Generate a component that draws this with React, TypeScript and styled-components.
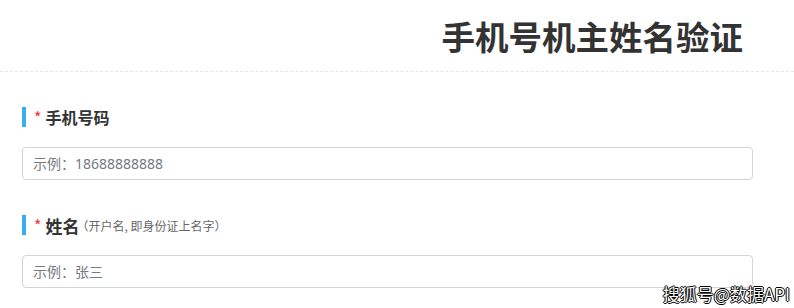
import React from 'react';
import styled, { createGlobalStyle } from 'styled-components';

const GlobalStyle = createGlobalStyle`
  html, body {
    margin: 0;
    padding: 0;
    background: #fff;
    font-family: "Microsoft YaHei", "Noto Sans CJK SC", "Noto Sans", sans-serif;
  }
`;

const Page = styled.div`
  position: relative;
  width: 794px;
  height: 308px;
  overflow: hidden;
  background: #fff;
`;

const Header = styled.div`
  height: 72px;
  display: flex;
  align-items: center;
  justify-content: flex-end;
  padding-right: 51px;
  border-bottom: 1px dashed #e6e6e6;
  box-sizing: border-box;
`;

const Title = styled.h1`
  margin: 0;
  font-size: 33.5px;
  font-weight: 700;
  color: #333;
  line-height: 1;
`;

const Form = styled.div`
  padding: 35px 41px 0 22px;
`;

const Field = styled.div<{ $first?: boolean }>`
  margin-top: ${(p) => (p.$first ? 0 : 35)}px;
`;

const Label = styled.div`
  display: flex;
  align-items: center;
  height: 20px;
  border-left: 4px solid #38adf0;
  padding-left: 8px;
  margin-bottom: 20px;
`;

const Star = styled.span`
  color: #f5302f;
  font-size: 16px;
  margin-right: 4px;
  font-weight: 400;
`;

const LabelText = styled.span<{ $size?: number }>`
  font-size: ${(p) => p.$size ?? 16}px;
  font-weight: 700;
  color: #333;
`;

const Hint = styled.span`
  font-size: 12px;
  color: #666;
  margin-left: -3px;
`;

const Input = styled.input`
  display: block;
  width: 100%;
  height: 33px;
  box-sizing: border-box;
  border: 1px solid #d2d4d8;
  border-radius: 4px;
  padding: 0 10px;
  font-size: 14px;
  font-family: "Noto Sans", "Noto Sans CJK SC", sans-serif;
  outline: none;
  &::placeholder {
    color: #737a84;
  }
`;

const Watermark = styled.div`
  position: absolute;
  right: 4px;
  bottom: 6px;
  font-size: 17px;
  line-height: 1;
  color: #fff;
  font-family: "Microsoft YaHei", "Noto Sans CJK SC", sans-serif;
  text-shadow: 0 0 1px #000, 1px 0 0 #000, -1px 0 0 #000, 0 1px 0 #000, 0 -1px 0 #000;
`;

export default function App() {
  return (
    <Page>
      <GlobalStyle />
      <Header>
        <Title>手机号机主姓名验证</Title>
      </Header>
      <Form>
        <Field $first>
          <Label>
            <Star>*</Star>
            <LabelText>手机号码</LabelText>
          </Label>
          <Input placeholder="示例：18688888888" />
        </Field>
        <Field>
          <Label>
            <Star>*</Star>
            <LabelText $size={17}>姓名</LabelText>
            <Hint>（开户名, 即身份证上名字）</Hint>
          </Label>
          <Input placeholder="示例：张三" />
        </Field>
      </Form>
      <Watermark>搜狐号@数据API</Watermark>
    </Page>
  );
}
